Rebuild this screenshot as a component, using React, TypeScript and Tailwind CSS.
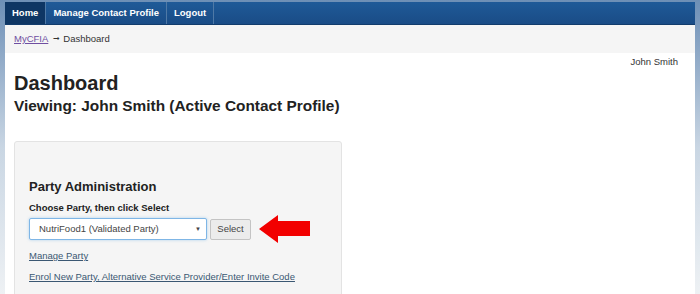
const navItems = [
  { label: 'Home', active: true },
  { label: 'Manage Contact Profile', active: false },
  { label: 'Logout', active: false },
];

const RedArrow = () => (
  <svg width="52" height="28" viewBox="0 0 52 28" className="block">
    <polygon points="0,14 19,0 19,6 51,6 51,21 19,21 19,28" fill="#f20000" />
  </svg>
);

const App = () => {
  return (
    <div
      className="w-[700px] h-[294px] overflow-hidden bg-gradient-to-b from-[#6d8fb6] via-[#c9d6e3] to-[#eef1f4] pt-[2px] px-[5px]"
      style={{ fontFamily: '"Liberation Sans", Arial, sans-serif' }}
    >
      <div className="bg-white h-full flex flex-col">
        {/* top nav */}
        <div className="h-[23px] shrink-0 flex bg-gradient-to-b from-[#1f5a98] to-[#1a4c86] border-b border-[#123c6c]">
          {navItems.map((item) => (
            <div
              key={item.label}
              className={
                item.active
                  ? 'px-[7px] flex items-center text-white font-bold text-[9.5px] bg-[#0e3664] border-r border-[#4f79a6]'
                  : 'px-[7px] flex items-center text-white font-bold text-[9.5px] border-r border-[#4f79a6]'
              }
            >
              {item.label}
            </div>
          ))}
        </div>

        {/* breadcrumb */}
        <div className="h-[28px] shrink-0 bg-[#f5f5f5] flex items-center pl-[9px] text-[9.5px] text-[#333]">
          <span className="text-[#6f4ea1] underline">MyCFIA</span>
          <span className="ml-[5px] text-[8px]">➞</span>
          <span className="ml-[3px]">Dashboard</span>
        </div>

        {/* body */}
        <div className="flex-1 px-[9px]">
          <div className="text-right text-[9.5px] text-[#333] pt-[3px] pr-[8px] leading-[12px]">
            John Smith
          </div>
          <h1 className="text-[20px] font-bold text-[#222] leading-[24px] mt-[3px]">Dashboard</h1>
          <h2 className="text-[15.4px] font-bold text-[#222] leading-[18px] mt-[2px]">
            Viewing: John Smith (Active Contact Profile)
          </h2>

          <div className="mt-[26px] w-[328px] h-[200px] bg-[#f5f5f5] border border-[#e3e3e3] rounded-[3px] pt-[37px] px-[14px]">
            <div className="text-[13px] font-bold text-[#222] leading-[16px]">Party Administration</div>
            <div className="text-[9.5px] font-bold text-[#222] mt-[7px] leading-[12px]">
              Choose Party, then click Select
            </div>
            <div className="flex items-center mt-[4px] h-[22px]">
              <div className="w-[178px] h-[22px] bg-white border border-[#7fb6e6] rounded-[2px] flex items-center justify-between pl-[9px] pr-[5px] text-[9.5px] text-[#444] shadow-[0_0_3px_rgba(102,175,233,0.5)]">
                <span>NutriFood1 (Validated Party)</span>
                <span className="text-[6px]">▼</span>
              </div>
              <div className="ml-[3px] w-[41px] h-[21px] bg-[#ececec] border border-[#c4c4c4] rounded-[2px] flex items-center justify-center text-[9.5px] text-[#444]">
                Select
              </div>
              <div className="ml-[8px]">
                <RedArrow />
              </div>
            </div>
            <div className="mt-[10px] text-[9.5px] text-[#3b5873] underline leading-[12px]">Manage Party</div>
            <div className="mt-[9px] text-[9.5px] text-[#3b5873] underline leading-[12px]">
              Enrol New Party, Alternative Service Provider/Enter Invite Code
            </div>
          </div>
        </div>
      </div>
    </div>
  );
};

export default App;
